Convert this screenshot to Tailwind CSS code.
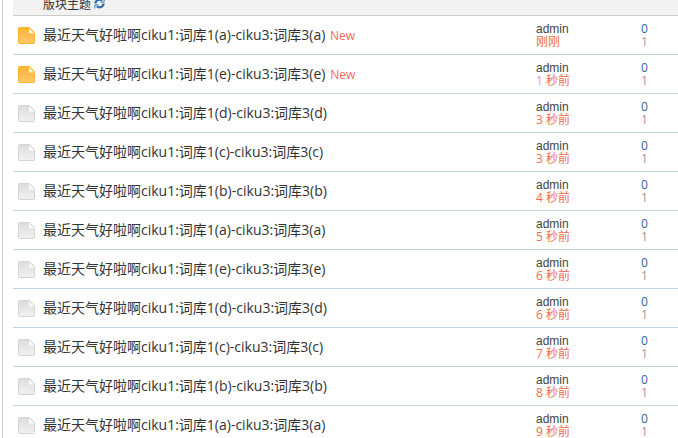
<!DOCTYPE html>
<html lang="zh">
<head>
<meta charset="UTF-8">
<title>版块主题</title>
<script src="https://cdn.jsdelivr.net/npm/@tailwindcss/browser@4"></script>
</head>
<body class="bg-white h-[438px] overflow-hidden font-['Open_Sans','Noto_Sans_CJK_SC',sans-serif] text-[#444]">
<svg class="absolute w-0 h-0"><defs>
  <linearGradient id="hot" x1="0" y1="0" x2="0" y2="1"><stop offset="0" stop-color="#ffb239"/><stop offset="1" stop-color="#ffc966"/></linearGradient>
  <linearGradient id="cold" x1="0" y1="0" x2="0" y2="1"><stop offset="0" stop-color="#dcdcdc"/><stop offset="1" stop-color="#f1f1f1"/></linearGradient>
  <path id="sheet" d="M1.500 .5h10l5 5v10a1 1 0 0 1-1 1h-14a1 1 0 0 1-1-1v-14a1 1 0 0 1 1-1z"/>
  <path id="fold" d="M11 1l5.500 5.500h-5.500z"/>
</defs></svg>
<div class="ml-[2px] border-l border-[#ccc] pl-[10px] h-[438px] overflow-hidden">
  <div class="h-4 bg-[#f2f2f2] border-b border-[#ccc] pl-[30px] flex items-center text-xs leading-none text-[#333]">
    <span class="-mt-[6px]">版块主题</span>
    <svg class="w-[11px] h-[11px] ml-[3px] -mt-[8px]" viewBox="0 0 12 12" fill="none" stroke="#2f6db5" stroke-width="2.500"><path d="M1.500 6a4.500 4.500 0 0 1 7.500-3M10.500 6a4.500 4.500 0 0 1-7.500 3"/><path d="M11 .5v4h-4M1 11.500v-4h4" stroke-width="1"/></svg>
  </div>

  <!-- new threads -->
  <div class="h-[39px] border-b border-[#c2d5e3] flex items-center">
    <svg class="w-[17px] h-[17px] ml-[5px] mr-[8px] shrink-0" viewBox="0 0 17 17"><use href="#sheet" fill="url(#hot)" stroke="#fdb135"/><use href="#fold" fill="#fdf0d5"/></svg>
    <span class="w-[493px] text-sm text-[#333]">最近天气好啦啊ciku1:词库1(a)-ciku3:词库3(a) <span class="text-xs text-[#f66] ml-px">New</span></span>
    <div class="w-[105px] text-xs leading-[13px]"><div class="pt-px leading-[12px] font-['Liberation_Sans',sans-serif]">admin</div><div class="text-[#f26c4f]">刚刚</div></div>
    <div class="text-xs leading-[13px]"><div class="text-[#369]">0</div><div class="text-[#999]">1</div></div>
  </div>
  <div class="h-[39px] border-b border-[#c2d5e3] flex items-center">
    <svg class="w-[17px] h-[17px] ml-[5px] mr-[8px] shrink-0" viewBox="0 0 17 17"><use href="#sheet" fill="url(#hot)" stroke="#fdb135"/><use href="#fold" fill="#fdf0d5"/></svg>
    <span class="w-[493px] text-sm text-[#333]">最近天气好啦啊ciku1:词库1(e)-ciku3:词库3(e) <span class="text-xs text-[#f66] ml-px">New</span></span>
    <div class="w-[105px] text-xs leading-[13px]"><div class="pt-px leading-[12px] font-['Liberation_Sans',sans-serif]">admin</div><div class="text-[#f26c4f]"><span class="text-[#f8c]">1</span> 秒前</div></div>
    <div class="text-xs leading-[13px]"><div class="text-[#369]">0</div><div class="text-[#999]">1</div></div>
  </div>

  <!-- older threads -->
  <div class="h-[39px] border-b border-[#c2d5e3] flex items-center">
    <svg class="w-[17px] h-[17px] ml-[5px] mr-[8px] shrink-0" viewBox="0 0 17 17"><use href="#sheet" fill="url(#cold)" stroke="#d4d4d4"/><use href="#fold" fill="#fafafa"/></svg>
    <span class="w-[493px] text-sm text-[#333]">最近天气好啦啊ciku1:词库1(d)-ciku3:词库3(d)</span>
    <div class="w-[105px] text-xs leading-[13px]"><div class="pt-px leading-[12px] font-['Liberation_Sans',sans-serif]">admin</div><div class="text-[#f26c4f]">3 秒前</div></div>
    <div class="text-xs leading-[13px]"><div class="text-[#369]">0</div><div class="text-[#999]">1</div></div>
  </div>
  <div class="h-[39px] border-b border-[#c2d5e3] flex items-center">
    <svg class="w-[17px] h-[17px] ml-[5px] mr-[8px] shrink-0" viewBox="0 0 17 17"><use href="#sheet" fill="url(#cold)" stroke="#d4d4d4"/><use href="#fold" fill="#fafafa"/></svg>
    <span class="w-[493px] text-sm text-[#333]">最近天气好啦啊ciku1:词库1(c)-ciku3:词库3(c)</span>
    <div class="w-[105px] text-xs leading-[13px]"><div class="pt-px leading-[12px] font-['Liberation_Sans',sans-serif]">admin</div><div class="text-[#f26c4f]">3 秒前</div></div>
    <div class="text-xs leading-[13px]"><div class="text-[#369]">0</div><div class="text-[#999]">1</div></div>
  </div>
  <div class="h-[39px] border-b border-[#c2d5e3] flex items-center">
    <svg class="w-[17px] h-[17px] ml-[5px] mr-[8px] shrink-0" viewBox="0 0 17 17"><use href="#sheet" fill="url(#cold)" stroke="#d4d4d4"/><use href="#fold" fill="#fafafa"/></svg>
    <span class="w-[493px] text-sm text-[#333]">最近天气好啦啊ciku1:词库1(b)-ciku3:词库3(b)</span>
    <div class="w-[105px] text-xs leading-[13px]"><div class="pt-px leading-[12px] font-['Liberation_Sans',sans-serif]">admin</div><div class="text-[#f26c4f]">4 秒前</div></div>
    <div class="text-xs leading-[13px]"><div class="text-[#369]">0</div><div class="text-[#999]">1</div></div>
  </div>
  <div class="h-[39px] border-b border-[#c2d5e3] flex items-center">
    <svg class="w-[17px] h-[17px] ml-[5px] mr-[8px] shrink-0" viewBox="0 0 17 17"><use href="#sheet" fill="url(#cold)" stroke="#d4d4d4"/><use href="#fold" fill="#fafafa"/></svg>
    <span class="w-[493px] text-sm text-[#333]">最近天气好啦啊ciku1:词库1(a)-ciku3:词库3(a)</span>
    <div class="w-[105px] text-xs leading-[13px]"><div class="pt-px leading-[12px] font-['Liberation_Sans',sans-serif]">admin</div><div class="text-[#f26c4f]">5 秒前</div></div>
    <div class="text-xs leading-[13px]"><div class="text-[#369]">0</div><div class="text-[#999]">1</div></div>
  </div>
  <div class="h-[39px] border-b border-[#c2d5e3] flex items-center">
    <svg class="w-[17px] h-[17px] ml-[5px] mr-[8px] shrink-0" viewBox="0 0 17 17"><use href="#sheet" fill="url(#cold)" stroke="#d4d4d4"/><use href="#fold" fill="#fafafa"/></svg>
    <span class="w-[493px] text-sm text-[#333]">最近天气好啦啊ciku1:词库1(e)-ciku3:词库3(e)</span>
    <div class="w-[105px] text-xs leading-[13px]"><div class="pt-px leading-[12px] font-['Liberation_Sans',sans-serif]">admin</div><div class="text-[#f26c4f]">6 秒前</div></div>
    <div class="text-xs leading-[13px]"><div class="text-[#369]">0</div><div class="text-[#999]">1</div></div>
  </div>
  <div class="h-[39px] border-b border-[#c2d5e3] flex items-center">
    <svg class="w-[17px] h-[17px] ml-[5px] mr-[8px] shrink-0" viewBox="0 0 17 17"><use href="#sheet" fill="url(#cold)" stroke="#d4d4d4"/><use href="#fold" fill="#fafafa"/></svg>
    <span class="w-[493px] text-sm text-[#333]">最近天气好啦啊ciku1:词库1(d)-ciku3:词库3(d)</span>
    <div class="w-[105px] text-xs leading-[13px]"><div class="pt-px leading-[12px] font-['Liberation_Sans',sans-serif]">admin</div><div class="text-[#f26c4f]">6 秒前</div></div>
    <div class="text-xs leading-[13px]"><div class="text-[#369]">0</div><div class="text-[#999]">1</div></div>
  </div>
  <div class="h-[39px] border-b border-[#c2d5e3] flex items-center">
    <svg class="w-[17px] h-[17px] ml-[5px] mr-[8px] shrink-0" viewBox="0 0 17 17"><use href="#sheet" fill="url(#cold)" stroke="#d4d4d4"/><use href="#fold" fill="#fafafa"/></svg>
    <span class="w-[493px] text-sm text-[#333]">最近天气好啦啊ciku1:词库1(c)-ciku3:词库3(c)</span>
    <div class="w-[105px] text-xs leading-[13px]"><div class="pt-px leading-[12px] font-['Liberation_Sans',sans-serif]">admin</div><div class="text-[#f26c4f]">7 秒前</div></div>
    <div class="text-xs leading-[13px]"><div class="text-[#369]">0</div><div class="text-[#999]">1</div></div>
  </div>
  <div class="h-[39px] border-b border-[#c2d5e3] flex items-center">
    <svg class="w-[17px] h-[17px] ml-[5px] mr-[8px] shrink-0" viewBox="0 0 17 17"><use href="#sheet" fill="url(#cold)" stroke="#d4d4d4"/><use href="#fold" fill="#fafafa"/></svg>
    <span class="w-[493px] text-sm text-[#333]">最近天气好啦啊ciku1:词库1(b)-ciku3:词库3(b)</span>
    <div class="w-[105px] text-xs leading-[13px]"><div class="pt-px leading-[12px] font-['Liberation_Sans',sans-serif]">admin</div><div class="text-[#f26c4f]">8 秒前</div></div>
    <div class="text-xs leading-[13px]"><div class="text-[#369]">0</div><div class="text-[#999]">1</div></div>
  </div>
  <div class="h-[39px] border-b border-[#c2d5e3] flex items-center">
    <svg class="w-[17px] h-[17px] ml-[5px] mr-[8px] shrink-0" viewBox="0 0 17 17"><use href="#sheet" fill="url(#cold)" stroke="#d4d4d4"/><use href="#fold" fill="#fafafa"/></svg>
    <span class="w-[493px] text-sm text-[#333]">最近天气好啦啊ciku1:词库1(a)-ciku3:词库3(a)</span>
    <div class="w-[105px] text-xs leading-[13px]"><div class="pt-px leading-[12px] font-['Liberation_Sans',sans-serif]">admin</div><div class="text-[#f26c4f]">9 秒前</div></div>
    <div class="text-xs leading-[13px]"><div class="text-[#369]">0</div><div class="text-[#999]">1</div></div>
  </div>
</div>
</body>
</html>
